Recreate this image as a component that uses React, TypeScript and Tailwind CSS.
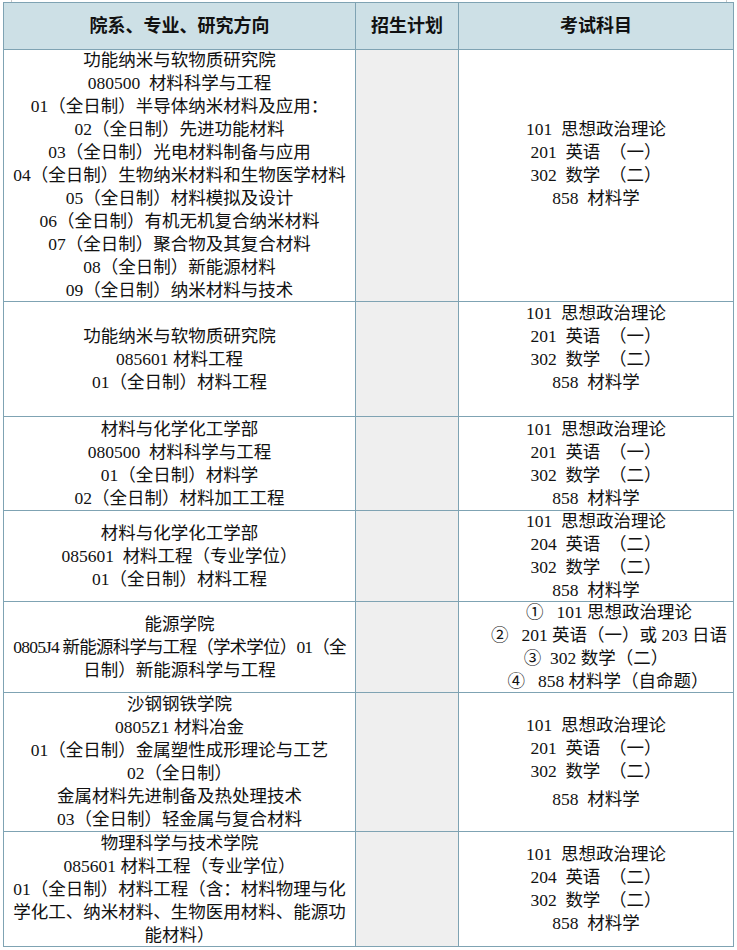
import React from "react";

type Line = string | { t: string; c: string };
type Cell = { lines: Line[]; extra?: string; lastGap?: boolean };
type Row = { h: string; left: Cell; right: Cell };

const subjA = ["101  思想政治理论", "201  英语  （一）", "302  数学  （二）", "858  材料学"];
const subjB = ["101  思想政治理论", "204  英语  （二）", "302  数学  （二）", "858  材料学"];

const rows: Row[] = [
  {
    h: "h-[252px]",
    left: {
      lines: [
        "功能纳米与软物质研究院",
        "080500  材料科学与工程",
        "01（全日制）半导体纳米材料及应用：",
        "02（全日制）先进功能材料",
        "03（全日制）光电材料制备与应用",
        "04（全日制）生物纳米材料和生物医学材料",
        "05（全日制）材料模拟及设计",
        "06（全日制）有机无机复合纳米材料",
        "07（全日制）聚合物及其复合材料",
        "08（全日制）新能源材料",
        "09（全日制）纳米材料与技术",
      ],
    },
    right: { lines: subjA, extra: "pb-[23px]" },
  },
  {
    h: "h-[115px]",
    left: { lines: ["功能纳米与软物质研究院", "085601 材料工程", "01（全日制）材料工程"] },
    right: { lines: subjA, extra: "pb-[23px]" },
  },
  {
    h: "h-[94px]",
    left: {
      lines: ["材料与化学化工学部", "080500  材料科学与工程", "01（全日制）材料学", "02（全日制）材料加工工程"],
    },
    right: { lines: subjA },
  },
  {
    h: "h-[91px]",
    left: { lines: ["材料与化学化工学部", "085601  材料工程（专业学位）", "01（全日制）材料工程"] },
    right: { lines: subjB },
  },
  {
    h: "h-[91px]",
    left: {
      lines: [
        "能源学院",
        { t: "0805J4 新能源科学与工程（学术学位）01（全", c: "tracking-[-0.8px]" },
        "日制）新能源科学与工程",
      ],
    },
    right: {
      lines: [
        { t: "①   101 思想政治理论", c: "pl-[26px]" },
        { t: "②   201 英语（一）或 203 日语", c: "pl-[26px]" },
        { t: "③  302 数学（二）", c: "" },
        { t: "④   858 材料学（自命题）", c: "pl-[24px]" },
      ],
    },
  },
  {
    h: "h-[139px]",
    left: {
      lines: [
        "沙钢钢铁学院",
        "0805Z1 材料冶金",
        "01（全日制）金属塑性成形理论与工艺",
        "02（全日制）",
        "金属材料先进制备及热处理技术",
        "03（全日制）轻金属与复合材料",
      ],
    },
    right: { lines: subjA, lastGap: true },
  },
  {
    h: "h-[115px]",
    left: {
      lines: [
        "物理科学与技术学院",
        "085601 材料工程（专业学位）",
        "01（全日制）材料工程（含：材料物理与化",
        "学化工、纳米材料、生物医用材料、能源功",
        "能材料）",
      ],
    },
    right: { lines: subjB },
  },
];

function Lines({ cell }: { cell: Cell }) {
  return (
    <>
      {cell.lines.map((l, i) => {
        const t = typeof l === "string" ? l : l.t;
        const c = typeof l === "string" ? "" : l.c;
        return (
          <div
            key={i}
            className={
              "whitespace-pre leading-[23px] " +
              c +
              " " +
              (cell.lastGap && i === cell.lines.length - 1 ? "mt-[5px]" : "")
            }
          >
            {t}
          </div>
        );
      })}
    </>
  );
}

export default function App() {
  const font = { fontFamily: "'Liberation Serif', 'Noto Sans CJK SC', serif" };
  return (
    <div className="w-[737px] h-[950px] bg-white text-[#111] text-[17.5px]" style={font}>
      <div className="ml-[11px] w-[716px] h-[2px] border-x border-[#c8c8c8]" />
      <div className="ml-[3px] w-[731px] border-l border-t border-[#7fa3b3] flex flex-col">
        <div className="flex h-[47px] bg-[#cde0e6]">
          <div className="w-[352px] border-r border-b border-[#7fa3b3] flex items-center justify-center font-bold text-[18px]">
            院系、专业、研究方向
          </div>
          <div className="w-[103px] border-r border-b border-[#7fa3b3] flex items-center justify-center font-bold text-[18px]">
            招生计划
          </div>
          <div className="w-[275px] border-r border-b border-[#7fa3b3] flex items-center justify-center font-bold text-[18px]">
            考试科目
          </div>
        </div>
        {rows.map((r, i) => (
          <div key={i} className={"flex " + r.h}>
            <div className="w-[352px] border-r border-b border-[#7fa3b3] flex flex-col items-center justify-center text-center">
              <Lines cell={r.left} />
            </div>
            <div className="w-[103px] border-r border-b border-[#7fa3b3] bg-[#efefef]" />
            <div
              className={
                "w-[275px] border-r border-b border-[#7fa3b3] flex flex-col items-center justify-center text-center " +
                (r.right.extra ?? "")
              }
            >
              <Lines cell={r.right} />
            </div>
          </div>
        ))}
      </div>
    </div>
  );
}
